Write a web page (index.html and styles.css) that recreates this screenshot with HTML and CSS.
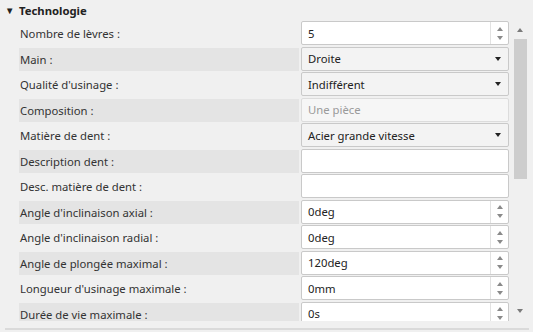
FILE: index.html
```html
<!DOCTYPE html>
<html lang="fr">
<head>
    <meta charset="UTF-8">
    <title>Technologie</title>
    <link rel="stylesheet" href="styles.css">
</head>
<body>
<div class="panel">
    <div class="group-title"><span class="caret">&#9660;</span>Technologie</div>
    <div class="scroll-area">
        <div class="rows">
            <div class="row">
                <div class="label">Nombre de lèvres :</div>
                <div class="field spin"><span class="value">5</span><span class="spin-btns"><i class="up"></i><i class="down"></i></span></div>
            </div>
            <div class="row alt">
                <div class="label">Main :</div>
                <div class="field combo"><span class="value">Droite</span><i class="drop"></i></div>
            </div>
            <div class="row">
                <div class="label">Qualité d'usinage :</div>
                <div class="field combo"><span class="value">Indifférent</span><i class="drop"></i></div>
            </div>
            <div class="row alt">
                <div class="label">Composition :</div>
                <div class="field disabled"><span class="value">Une pièce</span></div>
            </div>
            <div class="row">
                <div class="label">Matière de dent :</div>
                <div class="field combo"><span class="value">Acier grande vitesse</span><i class="drop"></i></div>
            </div>
            <div class="row alt">
                <div class="label">Description dent :</div>
                <div class="field"><span class="value"></span></div>
            </div>
            <div class="row">
                <div class="label">Desc. matière de dent :</div>
                <div class="field"><span class="value"></span></div>
            </div>
            <div class="row alt">
                <div class="label">Angle d'inclinaison axial :</div>
                <div class="field spin"><span class="value">0deg</span><span class="spin-btns"><i class="up"></i><i class="down"></i></span></div>
            </div>
            <div class="row">
                <div class="label">Angle d'inclinaison radial :</div>
                <div class="field spin"><span class="value">0deg</span><span class="spin-btns"><i class="up"></i><i class="down"></i></span></div>
            </div>
            <div class="row alt">
                <div class="label">Angle de plongée maximal :</div>
                <div class="field spin"><span class="value">120deg</span><span class="spin-btns"><i class="up"></i><i class="down"></i></span></div>
            </div>
            <div class="row">
                <div class="label">Longueur d'usinage maximale :</div>
                <div class="field spin"><span class="value">0mm</span><span class="spin-btns"><i class="up"></i><i class="down"></i></span></div>
            </div>
            <div class="row alt">
                <div class="label">Durée de vie maximale :</div>
                <div class="field spin"><span class="value">0s</span><span class="spin-btns"><i class="up"></i><i class="down"></i></span></div>
            </div>
        </div>
        <div class="scrollbar">
            <i class="arrow-up"></i>
            <div class="track"><div class="thumb"></div></div>
            <i class="arrow-down"></i>
        </div>
    </div>
    <div class="bottom-line"></div>
</div>
</body>
</html>
```

FILE: styles.css
```css
*{
    margin: 0;
    padding: 0;
    box-sizing: border-box;
}
body{
    background: #f0f0f0;
    font-family: "Noto Sans", "Open Sans", sans-serif;
    font-size: 11.3px;
    color: #333;
}
.panel{
    width: 533px;
    height: 332px;
    overflow: hidden;
}
.group-title{
    height: 21px;
    display: flex;
    align-items: center;
    padding-left: 5px;
    font-weight: bold;
    color: #222;
}
.group-title .caret{
    font-size: 9.5px;
    width: 14px;
}
.scroll-area{
    display: flex;
    height: 300px;
}
.rows{
    width: 512px;
    padding-left: 19px;
    overflow: hidden;
}
.row{
    display: grid;
    grid-template-columns: 280px 208px;
    column-gap: 2px;
    height: 25.5px;
}
.label{
    display: flex;
    align-items: center;
    padding-left: 1px;
    margin: 1px 0 1px;
}
.row.alt .label{
    background: #e4e4e4;
}
.field{
    height: 24px;
    display: flex;
    align-items: center;
    background: #fff;
    border: 1px solid #c9c9c9;
    border-radius: 2px;
    color: #222;
}
.field .value{
    flex: 1;
    padding-left: 6px;
}
.field.combo{
    background: #f3f3f3;
}
.field.disabled{
    background: #f6f6f6;
    border-color: #dcdcdc;
    color: #9a9a9a;
}
.drop{
    width: 0;
    height: 0;
    border-left: 3.5px solid transparent;
    border-right: 3.5px solid transparent;
    border-top: 4px solid #222;
    margin-right: 7px;
}
.spin-btns{
    width: 18px;
    height: 100%;
    border-left: 1px solid #e2e2e2;
    display: flex;
    flex-direction: column;
    align-items: center;
    justify-content: center;
    gap: 5px;
}
.spin-btns .up{
    border-left: 3px solid transparent;
    border-right: 3px solid transparent;
    border-bottom: 4px solid #8a8a8a;
}
.spin-btns .down{
    border-left: 3px solid transparent;
    border-right: 3px solid transparent;
    border-top: 4px solid #8a8a8a;
}
.scrollbar{
    width: 14px;
    margin-left: 1px;
    display: flex;
    flex-direction: column;
    align-items: center;
}
.arrow-up{
    margin-top: 7px;
    border-left: 3.5px solid transparent;
    border-right: 3.5px solid transparent;
    border-bottom: 4px solid #7a7a7a;
}
.track{
    flex: 1;
    width: 13px;
    padding-top: 7px;
}
.thumb{
    height: 140px;
    background: #cdcdcd;
}
.arrow-down{
    margin-bottom: 8px;
    border-left: 3.5px solid transparent;
    border-right: 3.5px solid transparent;
    border-top: 4px solid #7a7a7a;
}
.bottom-line{
    margin: 7px 4px 0 5px;
    height: 2px;
    background: #dadada;
}
```
